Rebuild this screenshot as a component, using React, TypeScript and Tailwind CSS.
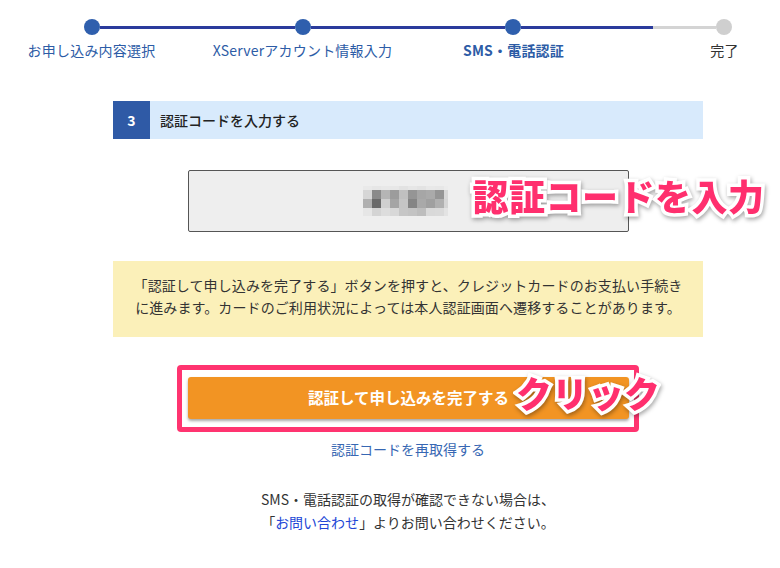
import type { ReactNode } from 'react';

const font = { fontFamily: '"Noto Sans CJK JP", "Noto Sans", sans-serif' };

// pixelated code (mosaic) shown in the input
const mosaic: { h: string; cells: string[] }[] = [
  { h: 'h-[4px]', cells: ['#e9e9e9', '#e6e6e6', '#e8e8e8', '#e7e7e7', '#e2e2e2', '#e6e6e6', '#e3e3e3', '#e8e8e8', '#e7e7e7', '#ececec'] },
  { h: 'h-[9px]', cells: ['#d6d6d6', '#8a8a8a', '#b5b5b5', '#9c9c9c', '#c0c0c0', '#959595', '#a6a6a6', '#aaaaaa', '#959595', '#d8d8d8'] },
  { h: 'h-[9px]', cells: ['#b0b0b0', '#6a6a6a', '#cfcfcf', '#a5a5a5', '#c5c5c5', '#858585', '#a9a9a9', '#a0a0a0', '#b0b0b0', '#d5d5d5'] },
  { h: 'h-[8px]', cells: ['#e6e6e6', '#d4d4d4', '#dddddd', '#d8d8d8', '#c6c6c6', '#c3c3c3', '#bdbdbd', '#d9d9d9', '#dadada', '#e3e3e3'] },
];

const steps = [
  { label: 'お申し込み内容選択', tone: 'text-[#2d5ca6]' },
  { label: 'XServerアカウント情報入力', tone: 'text-[#2d5ca6]' },
  { label: 'SMS・電話認証', tone: 'font-bold text-[#2d5ca6]' },
  { label: '完了', tone: 'text-[#333]' },
];

function Dot({ done }: { done: boolean }) {
  return <span className={`size-[16px] shrink-0 rounded-full ${done ? 'bg-[#2f5fad]' : 'bg-[#cfcfcf]'}`} />;
}

function Callout({ children, className }: { children: ReactNode; className: string }) {
  return (
    <span
      className={`pointer-events-none absolute whitespace-nowrap font-black leading-none text-[#ff2f6e] [-webkit-text-stroke:7px_white] [paint-order:stroke_fill] drop-shadow-[1px_2px_2px_rgba(0,0,0,0.35)] ${className}`}
    >
      {children}
    </span>
  );
}

export default function App() {
  return (
    <div className="h-[568px] w-[780px] overflow-hidden bg-white text-[14px] text-[#333]" style={font}>
      {/* stepper */}
      <div className="pt-[19px]">
        <div className="ml-[84px] flex w-[648px] items-center">
          <Dot done />
          <span className="h-[3px] flex-1 bg-[#2a3b9c]" />
          <Dot done />
          <span className="h-[3px] flex-1 bg-[#2a3b9c]" />
          <Dot done />
          <span className="flex h-[3px] flex-1">
            <span className="w-[132px] bg-[#2a3b9c]" />
            <span className="flex-1 bg-[#d4d4d4]" />
          </span>
          <Dot done={false} />
        </div>
        <div className="ml-[-14px] mt-[5px] flex">
          {steps.map((step) => (
            <span key={step.label} className={`w-[211px] shrink-0 text-center text-[14px] leading-[20px] tracking-[0.2px] ${step.tone}`}>
              {step.label}
            </span>
          ))}
        </div>
      </div>

      <div className="ml-[113px] w-[590px]">
        {/* section header */}
        <div className="mt-[41px] flex h-[38px] items-center bg-[#d8eafc]">
          <span className="flex h-full w-[37px] items-center justify-center bg-[#2f5aa6] font-bold text-white">3</span>
          <span className="pl-[10px] font-medium text-[#222]">認証コードを入力する</span>
        </div>

        {/* code input */}
        <div className="relative mx-auto mt-[31px] w-[441px]">
          <div className="flex h-[62px] items-center justify-center rounded-[2px] border border-[#555] bg-[#eeeeee] pr-[6px]">
            <div className="flex flex-col">
              {mosaic.map((row, r) => (
                <div key={r} className={`flex ${row.h}`}>
                  {row.cells.map((c, i) => (
                    <span key={i} className={i === 9 ? 'w-[4px]' : 'w-[9px]'} style={{ background: c }} />
                  ))}
                </div>
              ))}
            </div>
          </div>
          <Callout className="left-[285px] top-[7px] text-[36px] tracking-[0.5px]">認証コードを入力</Callout>
        </div>

        {/* notice */}
        <div className="mt-[29px] h-[76px] bg-[#fbf0b9] pt-[13px] text-center leading-[22px] tracking-[0.1px]">
          <p>「認証して申し込みを完了する」ボタンを押すと、クレジットカードのお支払い手続き</p>
          <p>に進みます。カードのご利用状況によっては本人認証画面へ遷移することがあります。</p>
        </div>

        {/* submit */}
        <div className="relative mx-auto mt-[28px] w-[462px] rounded-[4px] border-[5px] border-[#ff3470] pb-[8px] pl-[6px] pr-[5px] pt-[7px]">
          <button className="flex h-[42px] w-[441px] items-center justify-center rounded-[3px] bg-[#f29423] text-[15.5px] font-bold text-white shadow-[0_2px_3px_rgba(0,0,0,0.35)]">
            認証して申し込みを完了する
          </button>
          <Callout className="left-[334px] top-[4px] text-[36px]">クリック</Callout>
        </div>

        <p className="mt-[7px] text-center leading-[20px] text-[#3767b3]">認証コードを再取得する</p>

        <div className="mt-[29px] text-center leading-[23px]">
          <p>SMS・電話認証の取得が確認できない場合は、</p>
          <p>
            「<span className="text-[#2246d6]">お問い合わせ</span>」よりお問い合わせください。
          </p>
        </div>
      </div>
    </div>
  );
}
